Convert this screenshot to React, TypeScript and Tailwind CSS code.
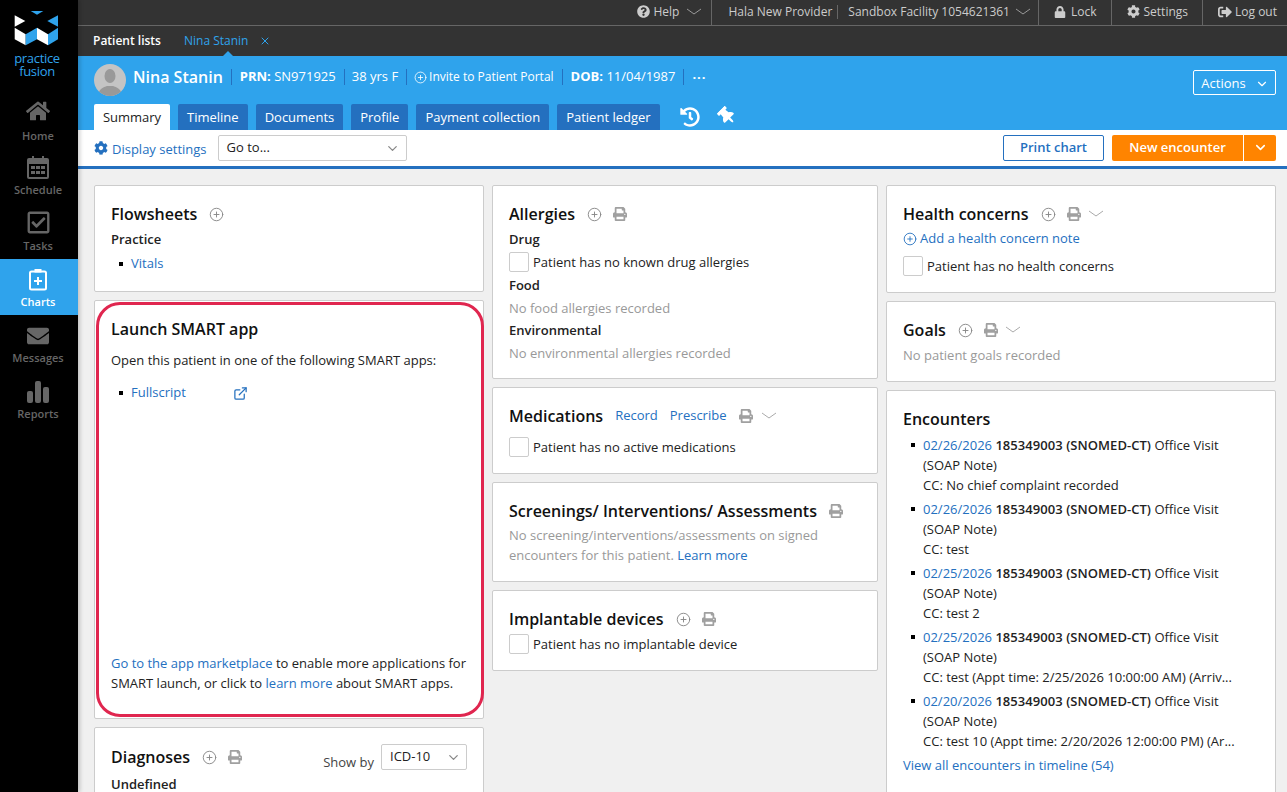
import React from "react";
import { ChevronDown, CirclePlus, ExternalLink, X } from "lucide-react";
import {
  FaCog,
  FaEnvelope,
  FaHistory,
  FaHome,
  FaLock,
  FaPrint,
  FaQuestionCircle,
  FaRegCheckSquare,
  FaSignOutAlt,
  FaThumbtack,
} from "react-icons/fa";

const Logo = () => (
  <svg width="45" height="35" viewBox="0 0 45 35">
    <polygon points="16.7,0 29.3,0 23,3.7" fill="#2fa3ec" />
    <polygon points="0.7,4.3 11.3,10 0.7,15.7" fill="#fff" />
    <polygon points="44,4.3 44,15.7 33.3,10" fill="#2fa3ec" />
    <polygon points="0.7,16.7 11.7,23.3 11.7,34.3 0.7,28.3" fill="#fff" />
    <polygon points="11.7,23.3 23,16.7 23,28.3 11.7,34.3" fill="#2fa3ec" />
    <polygon points="23,16.7 34,23.3 34,34.3 23,28.3" fill="#fff" />
    <polygon points="34,23.3 44,16.7 44,28.3 34,34.3" fill="#2fa3ec" />
  </svg>
);

const CalendarIcon = () => (
  <svg width="22" height="24" viewBox="0 0 22 24" fill="#666">
    <path d="M2 3h3V1h2v2h8V1h2v2h3a2 2 0 0 1 2 2v17a2 2 0 0 1-2 2H2a2 2 0 0 1-2-2V5a2 2 0 0 1 2-2zm0 6v13h18V9H2z" />
    <rect x="4" y="11" width="4" height="3" />
    <rect x="9" y="11" width="4" height="3" />
    <rect x="14" y="11" width="4" height="3" />
    <rect x="4" y="16" width="4" height="3" />
    <rect x="9" y="16" width="4" height="3" />
    <rect x="14" y="16" width="4" height="3" />
  </svg>
);

const ChartIcon = () => (
  <svg width="20" height="23" viewBox="0 0 20 23" fill="none" stroke="#fff" strokeWidth="2">
    <rect x="2" y="3.5" width="16" height="18" rx="1.5" />
    <rect x="6.5" y="1" width="7" height="3.5" fill="#fff" stroke="none" />
    <path d="M10 9v8M6 13h8" />
  </svg>
);

const ReportsIcon = () => (
  <svg width="22" height="22" viewBox="0 0 22 22" fill="#666">
    <rect x="0" y="10" width="6" height="12" rx="2" />
    <rect x="8" y="0" width="6" height="22" rx="2" />
    <rect x="16" y="6" width="6" height="16" rx="2" />
  </svg>
);

// thin wide chevron used all over the chart header
const ThinChevron = ({ className = "" }: { className?: string }) => (
  <svg width="16" height="8" viewBox="0 0 16 8" fill="none" stroke="currentColor" strokeWidth="1" className={className}>
    <path d="M1 1l7 5 7-5" />
  </svg>
);

const navItems = [
  { label: "Home", icon: <FaHome size={24} color="#666" />, labelClass: "mt-[3px]" },
  { label: "Schedule", icon: <CalendarIcon />, labelClass: "mt-[1px]" },
  { label: "Tasks", icon: <FaRegCheckSquare size={25} color="#666" />, labelClass: "mt-[1px]" },
  { label: "Charts", icon: <ChartIcon />, labelClass: "mt-[1px]", active: true },
  { label: "Messages", icon: <FaEnvelope size={22} color="#666" />, labelClass: "mt-[1px]" },
  { label: "Reports", icon: <ReportsIcon />, labelClass: "mt-[1px]" },
];

const Sidebar = () => (
  <aside className="relative z-10 w-[78px] h-full shrink-0 bg-black shadow-[2px_0_4px_rgba(0,0,0,0.2)]">
    <div className="h-[91px] pt-[11px] pl-[14px]">
      <Logo />
      <div className="w-[46px] text-[#2fa3ec] text-[13px] leading-[13px] text-center mt-[6px] tracking-tight">
        practice
        <br />
        fusion
      </div>
    </div>
    {navItems.map((item) => (
      <div
        key={item.label}
        className={`h-[56px] pr-[2px] flex flex-col items-center ${item.active ? "bg-[#2fa3ec] text-white" : "text-[#666]"}`}
      >
        <div className="h-[33px] flex items-end justify-center pb-[1px]">{item.icon}</div>
        <div className={`text-[11px] leading-[18px] font-semibold ${item.labelClass}`}>{item.label}</div>
      </div>
    ))}
  </aside>
);

const TopBar = () => (
  <div className="h-[26px] bg-[#333] border-b border-[#666] flex items-center text-[12px] text-[#ccc]">
    <div className="ml-auto flex items-center h-[25px]">
      <div className="flex items-center h-full pb-[2px] pr-[9px] border-r border-[#666]">
        <FaQuestionCircle size={13} />
        <span className="ml-[4px]">Help</span>
        <ThinChevron className="ml-[7px] text-[#999]" />
      </div>
      <span className="ml-[16px] pr-[5px] mb-[2px] border-r border-[#666] leading-[14px]">Hala New Provider</span>
      <div className="flex items-center h-full pb-[2px] pl-[10px] pr-[7px] border-r border-[#666]">
        <span>Sandbox Facility 1054621361</span>
        <ThinChevron className="ml-[5px] text-[#999]" />
      </div>
      <div className="flex items-center h-full pb-[2px] pl-[15px] pr-[14px] border-r border-[#666]">
        <FaLock size={12} />
        <span className="ml-[5px]">Lock</span>
      </div>
      <div className="flex items-center h-full pb-[2px] pl-[15px] pr-[14px] border-r border-[#666]">
        <FaCog size={13} />
        <span className="ml-[4px]">Settings</span>
      </div>
      <div className="flex items-center h-full pb-[2px] pl-[15px] pr-[10px]">
        <FaSignOutAlt size={14} />
        <span className="ml-[3px]">Log out</span>
      </div>
    </div>
  </div>
);

const TabsBar = () => (
  <div className="h-[30px] bg-[#333] flex items-center pl-[15px] text-[12px] relative">
    <span className="font-semibold text-white">Patient lists</span>
    <span className="ml-[23px] text-[#2fa3ec]">Nina Stanin</span>
    <X size={12} className="ml-[11px] text-[#2fa3ec]" />
    <div className="absolute left-[145px] bottom-0 w-0 h-0 border-x-[5px] border-x-transparent border-b-[5px] border-b-[#2fa3ec]" />
  </div>
);

const Divider = () => <span className="w-px h-[16px] bg-[#2470bf] mx-[8px]" />;

const tabs = ["Timeline", "Documents", "Profile", "Payment collection", "Patient ledger"];

const PatientHeader = () => (
  <div className="h-[74px] bg-[#2fa3ec] pl-[16px] pr-[11px] relative">
    <div className="flex items-center h-[48px] text-white text-[12px]">
      <svg width="32" height="32" viewBox="0 0 32 32" className="rounded-full">
        <rect width="32" height="32" fill="#c4c4c4" />
        <ellipse cx="16" cy="12" rx="5.5" ry="7" fill="#999" />
        <path d="M4 32c0-7 6-9 9-10h6c3 1 9 3 9 10z" fill="#999" />
      </svg>
      <div className="flex items-center pb-[6px] text-[13px] whitespace-nowrap">
        <span className="ml-[7px] text-[16px] font-semibold">Nina Stanin</span>
        <Divider />
        <span>
          <b className="font-bold">PRN:</b> SN971925
        </span>
        <Divider />
        <span className="-ml-px">38 yrs F</span>
        <Divider />
        <CirclePlus size={13} strokeWidth={1.5} className="-ml-px" />
        <span className="ml-[2px] text-[12px]">Invite to Patient Portal</span>
        <Divider />
        <span>
          <b className="font-bold">DOB:</b> 11/04/1987
        </span>
        <Divider />
        <span className="tracking-[1px] font-bold leading-none">···</span>
      </div>
    </div>
    <div className="flex items-end h-[26px] gap-[8px] text-[13px]">
      <div className="h-[26px] pt-px w-[76px] bg-white rounded-t-[2px] flex items-center justify-center text-[#222]">Summary</div>
      {tabs.map((t) => (
        <div key={t} className="h-[26px] pt-px px-[9px] bg-[#2470bf] rounded-t-[2px] flex items-center text-white">
          {t}
        </div>
      ))}
      <div className="h-[26px] flex items-center ml-[12px] text-white">
        <FaHistory size={20} />
        <FaThumbtack size={18} className="ml-[18px] -mt-[2px] -rotate-45" />
      </div>
    </div>
    <div className="absolute right-[11px] top-[14px] w-[83px] h-[25px] pt-[2px] border border-white rounded-[2px] flex items-center justify-center text-white text-[13px]">
      <span className="ml-[1px]">Actions</span>
      <ChevronDown size={14} className="ml-[9px]" />
    </div>
  </div>
);

const Toolbar = () => (
  <div className="h-[39px] bg-white border-b-[3px] border-[#2470bf] flex items-center pl-[16px] pr-[11px] pb-px text-[13px]">
    <FaCog size={14} className="text-[#2470bf] mt-[1px]" />
    <span className="ml-[4px] text-[#2470bf] mt-[4px]">Display settings</span>
    <div className="ml-[11px] w-[189px] h-[26px] pt-px border border-[#ccc] rounded-[2px] flex items-center justify-between pl-[8px] pr-[6px] text-[#222]">
      Go to...
      <ChevronDown size={15} className="text-[#888]" />
    </div>
    <div className="ml-auto w-[101px] h-[26px] pt-px border border-[#2470bf] rounded-[2px] flex items-center justify-center text-[#2470bf] font-semibold">
      Print chart
    </div>
    <div className="ml-[8px] w-[131px] h-[26px] pt-px bg-[#ff8400] rounded-l-[2px] flex items-center justify-center text-white font-semibold">
      New encounter
    </div>
    <div className="ml-px w-[32px] h-[26px] bg-[#ff8400] rounded-r-[2px] flex items-center justify-center text-white">
      <ChevronDown size={15} strokeWidth={2.5} />
    </div>
  </div>
);

const Card = ({ className = "", children }: { className?: string; children: React.ReactNode }) => (
  <section className={`bg-white border border-[#ccc] rounded-[2px] px-[16px] pt-[16px] shrink-0 ${className}`}>{children}</section>
);

const Title = ({ children }: { children: React.ReactNode }) => (
  <h2 className="text-[16px] leading-[24px] font-semibold text-[#111]">{children}</h2>
);

const Plus = ({ className = "ml-[12px]" }: { className?: string }) => (
  <CirclePlus size={15} strokeWidth={1.5} className={`text-[#888] ${className}`} />
);
const Print = ({ className = "ml-[11px]" }: { className?: string }) => (
  <FaPrint size={14} className={`text-[#a0a0a0] ${className}`} />
);

const Head = ({ children }: { children: React.ReactNode }) => <div className="flex items-center h-[24px]">{children}</div>;
const Sub = ({ className = "mt-[3px]", children }: { className?: string; children: React.ReactNode }) => (
  <div className={`font-semibold leading-[20px] text-[#222] ${className}`}>{children}</div>
);
const Empty = ({ className = "mt-[3px]", children }: { className?: string; children: React.ReactNode }) => (
  <div className={`leading-[20px] text-[#999] ${className}`}>{children}</div>
);
const Check = ({ className = "mt-[3px]", children }: { className?: string; children: React.ReactNode }) => (
  <div className={`flex items-center h-[20px] leading-[20px] ${className}`}>
    <span className="w-[20px] h-[20px] border border-[#ccc] rounded-[2px] mr-[4px]" />
    {children}
  </div>
);
const Link = ({ className = "", children }: { className?: string; children: React.ReactNode }) => (
  <span className={`text-[#2470bf] ${className}`}>{children}</span>
);
const Bullet = () => <span className="w-[4px] h-[4px] bg-black shrink-0" />;

const encounters = [
  ["02/26/2026", "CC: No chief complaint recorded"],
  ["02/26/2026", "CC: test"],
  ["02/25/2026", "CC: test 2"],
  ["02/25/2026", "CC: test (Appt time: 2/25/2026 10:00:00 AM) (Arriv..."],
  ["02/20/2026", "CC: test 10 (Appt time: 2/20/2026 12:00:00 PM) (Ar..."],
];

const LeftColumn = () => (
  <div className="w-[390px] flex flex-col gap-[8px]">
    <Card className="h-[107px]">
      <Head>
        <Title>Flowsheets</Title>
        <Plus />
      </Head>
      <Sub>Practice</Sub>
      <div className="flex items-center h-[20px] mt-[5px] pl-[8px] gap-[8px]">
        <Bullet />
        <Link>Vitals</Link>
      </div>
    </Card>
    <Card className="h-[419px] relative flex flex-col">
      <Head>
        <Title>Launch SMART app</Title>
      </Head>
      <div className="mt-[9px] leading-[20px]">Open this patient in one of the following SMART apps:</div>
      <div className="flex items-center h-[20px] mt-[13px] pl-[8px] gap-[8px]">
        <Bullet />
        <Link className="w-[93px]">Fullscript</Link>
        <ExternalLink size={15} strokeWidth={2} className="text-[#2470bf] ml-px" />
      </div>
      <p className="mt-auto mb-[25px] leading-[20px]">
        <Link>Go to the app marketplace</Link> to enable more applications for SMART launch, or click to <Link>learn more</Link> about SMART apps.
      </p>
      <div className="absolute left-[1px] -right-px top-px bottom-px border-[3px] border-[#e0264f] rounded-[24px]" />
    </Card>
    <Card className="h-[100px] pt-[17px]">
      <div className="flex items-center h-[24px]">
        <Title>Diagnoses</Title>
        <Plus />
        <Print />
        <span className="ml-auto mt-[11px] text-[#444]">Show by</span>
        <div className="ml-[7px] w-[86px] h-[26px] border border-[#ccc] rounded-[2px] flex items-center justify-between pl-[8px] pr-[5px]">
          ICD-10
          <ChevronDown size={15} className="text-[#888]" />
        </div>
      </div>
      <Sub className="mt-[5px]">Undefined</Sub>
    </Card>
  </div>
);

const MiddleColumn = () => (
  <div className="w-[386px] flex flex-col gap-[8px]">
    <Card className="h-[194px]">
      <Head>
        <Title>Allergies</Title>
        <Plus />
        <Print />
      </Head>
      <Sub>Drug</Sub>
      <Check>Patient has no known drug allergies</Check>
      <Sub>Food</Sub>
      <Empty>No food allergies recorded</Empty>
      <Sub className="mt-[2px]">Environmental</Sub>
      <Empty>No environmental allergies recorded</Empty>
    </Card>
    <Card className="h-[87px]">
      <Head>
        <Title>Medications</Title>
        <Link className="ml-[12px]">Record</Link>
        <Link className="ml-[12px]">Prescribe</Link>
        <Print className="ml-[13px]" />
        <ThinChevron className="ml-[8px] text-[#aaa]" />
      </Head>
      <Check className="mt-[9px]">Patient has no active medications</Check>
    </Card>
    <Card className="h-[100px]">
      <Head>
        <Title>Screenings/ Interventions/ Assessments</Title>
        <Print className="ml-[12px]" />
      </Head>
      <div className="mt-[2px] leading-[20px] text-[#999]">
        No screening/interventions/assessments on signed encounters for this patient. <Link>Learn more</Link>
      </div>
    </Card>
    <Card className="h-[81px]">
      <Head>
        <Title>Implantable devices</Title>
        <Plus />
        <Print />
      </Head>
      <Check>Patient has no implantable device</Check>
    </Card>
  </div>
);

const RightColumn = () => (
  <div className="w-[390px] flex flex-col gap-[8px]">
    <Card className="h-[108px]">
      <Head>
        <Title>Health concerns</Title>
        <Plus />
        <Print />
        <ThinChevron className="ml-[7px] text-[#aaa]" />
      </Head>
      <div className="flex items-center h-[20px] mt-[3px] text-[#2470bf]">
        <CirclePlus size={14} strokeWidth={1.5} />
        <span className="ml-[3px]">Add a health concern note</span>
      </div>
      <Check className="mt-[7px]">Patient has no health concerns</Check>
    </Card>
    <Card className="h-[81px]">
      <Head>
        <Title>Goals</Title>
        <Plus />
        <Print />
        <ThinChevron className="ml-[7px] text-[#aaa]" />
      </Head>
      <Empty>No patient goals recorded</Empty>
    </Card>
    <Card className="h-[420px]">
      <Head>
        <Title>Encounters</Title>
      </Head>
      <ul className="mt-[4px] flex flex-col gap-[4px]">
        {encounters.map(([date, cc], i) => (
          <li key={i} className="relative pl-[20px] leading-[20px] whitespace-nowrap">
            <span className="absolute left-[8px] top-[8px] w-[4px] h-[4px] bg-black" />
            <Link>{date}</Link> <b className="font-semibold tracking-[0.05px]">185349003 (SNOMED-CT)</b> Office Visit
            <br />
            (SOAP Note)
            <br />
            {cc}
          </li>
        ))}
      </ul>
      <div className="mt-[4px] leading-[20px]">
        <Link>View all encounters in timeline (54)</Link>
      </div>
    </Card>
  </div>
);

export default function App() {
  return (
    <div className="w-[1287px] h-[792px] overflow-hidden flex bg-[#f0f0f0] text-[13px] text-[#222] [font-family:'Open_Sans',sans-serif]">
      <Sidebar />
      <div className="flex-1 min-w-0 flex flex-col">
        <TopBar />
        <TabsBar />
        <PatientHeader />
        <Toolbar />
        <main className="flex-1 min-h-0 overflow-hidden flex items-start gap-[8px] pl-[16px] pt-[16px]">
          <LeftColumn />
          <MiddleColumn />
          <RightColumn />
        </main>
      </div>
    </div>
  );
}
